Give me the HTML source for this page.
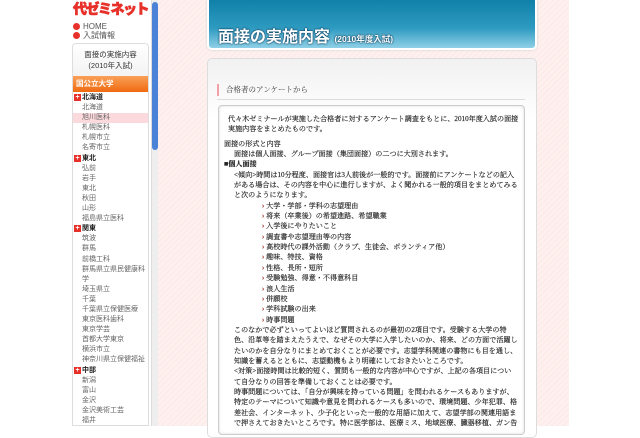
<!DOCTYPE html>
<html><head><meta charset="utf-8"><style>
*{margin:0;padding:0;box-sizing:border-box}
body{width:640px;height:426px;overflow:hidden;background:#fff;position:relative;font-family:"Liberation Sans","Noto Sans CJK JP",sans-serif}
.pink{position:absolute;left:158px;top:0;width:411px;height:426px;background:repeating-linear-gradient(135deg,#fdf0ee 0 3px,#fbe9e6 3px 4px)}
.logo{position:absolute;left:73px;top:1px;font-size:14px;font-weight:900;color:#e8302a;letter-spacing:-1.5px;line-height:16px;font-family:"Noto Sans CJK JP",sans-serif;-webkit-text-stroke:0.6px #e8302a}
.nav{position:absolute;left:73px;font-size:8px;color:#555;line-height:9px}
.nav i{display:inline-block;width:7px;height:7px;border-radius:50%;background:#e8302a;vertical-align:-1px;margin-right:3px}
.side{position:absolute;left:72px;top:43px;width:77px;height:383px;background:#fff;border:1px solid #ddd;border-radius:4px 4px 0 0;overflow:hidden}
.side .t{text-align:center;font-size:7.5px;color:#333;line-height:11px;padding-top:5px;height:32px;background:linear-gradient(#fff,#f3f3f3)}
.side .o{height:16px;background:linear-gradient(#f9a058,#f06a10);color:#fff;font-size:7.5px;font-weight:bold;line-height:16px;padding-left:3px}
.side ul{list-style:none;padding-top:1px}
.side li{font-size:7px;line-height:10.1px;height:10.1px;color:#666;padding-left:9px;white-space:nowrap;overflow:hidden}
.side li.h{font-weight:bold;color:#222;padding-left:1px}
.side li.h:before{content:"+";display:inline-block;width:7px;height:7px;background:#e8302a;color:#fff;font-size:7px;line-height:7px;text-align:center;margin-right:1px}
.side li.s{background:#fcd9dc}
.sb{position:absolute;left:151px;top:0;width:7px;height:426px;background:#eee;border-left:1px solid #ddd}
.sb div{position:absolute;left:0;top:2px;width:6px;height:148px;background:#4a82d8;border-radius:3px}
.ban{position:absolute;left:207px;top:-4px;width:330px;height:54px;border:2px solid #fff;border-radius:5px;background:linear-gradient(#0e7fa8,#2e9ac0 60%,#8ed0e6);box-shadow:0 0 2px #ccc}
.ban span{position:absolute;left:9px;top:25px;color:#fff;font-size:16px;font-weight:bold;text-shadow:0 0 2px #035,0 0 1px #035}
.ban small{font-size:8.5px}
.main{position:absolute;left:207px;top:58px;width:330px;height:380px;background:linear-gradient(#f1f1f1,#fff 60px);border:1px solid #ddd;border-radius:5px}
.ttl{position:absolute;left:217px;top:84px;font-size:7.5px;color:#333;border-left:2px solid #f4a0a8;padding-left:7px;line-height:12px;font-family:"Liberation Serif","Noto Serif CJK SC",serif}
.ln{position:absolute;left:217px;top:99px;width:308px;height:1px;background:#ddd}
.box{position:absolute;left:218px;top:105px;width:307px;height:330px;background:#fff;border:1px solid #ccc;border-radius:4px;box-shadow:inset 0 0 3px #ddd}
.tx{position:absolute;left:226px;top:114px;width:292px;font-family:"Liberation Serif","Noto Serif CJK SC",serif;font-size:7.1px;line-height:10.35px;color:#222;-webkit-text-stroke:0.15px #222}
.tx p{white-space:nowrap}
.li{padding-left:36px}
.li:before{content:"› ";color:#e8302a;font-weight:bold}
</style></head><body>
<div class="pink"></div>
<div class="logo">代ゼミネット</div>
<div class="nav" style="top:22px"><i></i>HOME</div>
<div class="nav" style="top:31px"><i></i>入試情報</div>
<div class="side">
<div class="t">面接の実施内容<br>(2010年入試)</div>
<div class="o">国公立大学</div>
<ul>
<li class="h">北海道</li><li>北海道</li><li class="s">旭川医科</li><li>札幌医科</li><li>札幌市立</li><li>名寄市立</li>
<li class="h">東北</li><li>弘前</li><li>岩手</li><li>東北</li><li>秋田</li><li>山形</li><li>福島県立医科</li>
<li class="h">関東</li><li>筑波</li><li>群馬</li><li>前橋工科</li><li>群馬県立県民健康科</li><li>学</li><li>埼玉県立</li><li>千葉</li><li>千葉県立保健医療</li><li>東京医科歯科</li><li>東京学芸</li><li>首都大学東京</li><li>横浜市立</li><li>神奈川県立保健福祉</li>
<li class="h">中部</li><li>新潟</li><li>富山</li><li>金沢</li><li>金沢美術工芸</li><li>福井</li>
</ul></div>
<div class="sb"><div></div></div>
<div class="ban"><span>面接の実施内容 <small>(2010年度入試)</small></span></div>
<div class="main"></div>
<div class="ttl">合格者のアンケートから</div>
<div class="ln"></div>
<div class="box"></div>
<div class="tx">
<p style="padding-left:2px">代々木ゼミナールが実施した合格者に対するアンケート調査をもとに、2010年度入試の面接</p>
<p style="padding-left:2px">実施内容をまとめたものです。</p>
<p style="margin-top:4px;margin-left:-2px">面接の形式と内容</p>
<p style="padding-left:8px">面接は個人面接、グループ面接（集団面接）の二つに大別されます。</p>
<p style="margin-left:-2px;font-weight:bold">■個人面接</p>
<p style="padding-left:8px">&lt;傾向&gt;時間は10分程度、面接官は3人前後が一般的です。面接前にアンケートなどの記入</p>
<p style="padding-left:8px">がある場合は、その内容を中心に進行しますが、よく聞かれる一般的項目をまとめてみる</p>
<p style="padding-left:8px">と次のようになります。</p>
<p class="li">大学・学部・学科の志望理由</p>
<p class="li">将来（卒業後）の希望進路、希望職業</p>
<p class="li">入学後にやりたいこと</p>
<p class="li">調査書や志望理由等の内容</p>
<p class="li">高校時代の課外活動（クラブ、生徒会、ボランティア他）</p>
<p class="li">趣味、特技、資格</p>
<p class="li">性格、長所・短所</p>
<p class="li">受験勉強、得意・不得意科目</p>
<p class="li">浪人生活</p>
<p class="li">併願校</p>
<p class="li">学科試験の出来</p>
<p class="li">時事問題</p>
<p style="padding-left:8px">このなかで必ずといってよいほど質問されるのが最初の2項目です。受験する大学の特</p>
<p style="padding-left:8px">色、沿革等を踏まえたうえで、なぜその大学に入学したいのか、将来、どの方面で活躍し</p>
<p style="padding-left:8px">たいのかを自分なりにまとめておくことが必要です。志望学科関連の書物にも目を通し、</p>
<p style="padding-left:8px">知識を蓄えるとともに、志望動機もより明確にしておきたいところです。</p>
<p style="padding-left:8px">&lt;対策&gt;面接時間は比較的短く、質問も一般的な内容が中心ですが、上記の各項目につい</p>
<p style="padding-left:8px">て自分なりの回答を準備しておくことは必要です。</p>
<p style="padding-left:8px">時事問題については、「自分が興味を持っている問題」を問われるケースもありますが、</p>
<p style="padding-left:8px">特定のテーマについて知識や意見を問われるケースも多いので、環境問題、少年犯罪、格</p>
<p style="padding-left:8px">差社会、インターネット、少子化といった一般的な用語に加えて、志望学部の関連用語ま</p>
<p style="padding-left:8px">で押さえておきたいところです。特に医学部は、医療ミス、地域医療、臓器移植、ガン告</p>
</div>
</body></html>
